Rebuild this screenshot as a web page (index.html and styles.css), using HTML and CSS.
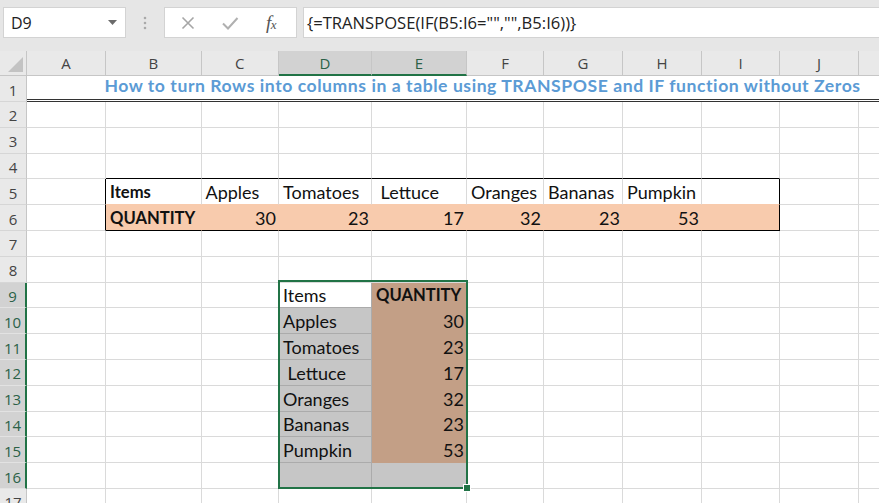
FILE: index.html
```html
<!DOCTYPE html>
<html>
<head>
<meta charset="utf-8">
<link rel="stylesheet" href="styles.css">
</head>
<body>
<div class="formula-bar">
  <div class="namebox"><span>D9</span><svg class="dd" width="9" height="5" viewBox="0 0 9 5"><polygon points="0,0 9,0 4.5,5" fill="#6b6b6b"/></svg></div>
  <div class="grip"><svg width="4" height="14" viewBox="0 0 4 14"><circle cx="2" cy="2" r="1.3" fill="#a9a9a9"/><circle cx="2" cy="7" r="1.3" fill="#a9a9a9"/><circle cx="2" cy="12" r="1.3" fill="#a9a9a9"/></svg></div>
  <div class="fx-box">
    <svg class="ic ic-x" width="20" height="20" viewBox="0 0 20 20"><path d="M4.5 4.5 L15.5 15.5 M15.5 4.5 L4.5 15.5" stroke="#a6a6a6" stroke-width="1.6" fill="none"/></svg>
    <svg class="ic ic-ok" width="20" height="20" viewBox="0 0 20 20"><path d="M3 10.5 L8 15.5 L17.5 5" stroke="#b0b0b0" stroke-width="2" fill="none"/></svg>
    <span class="fx">f<span class="fx-x">x</span></span>
  </div>
  <div class="formula">{=TRANSPOSE(IF(B5:I6="","",B5:I6))}</div>
</div>

<div class="sheet-wrap">
<table class="sheet">
  <colgroup>
    <col class="c-rh"><col class="c-a"><col class="c-b"><col class="c-c"><col class="c-d"><col class="c-e"><col class="c-f"><col class="c-g"><col class="c-h"><col class="c-i"><col class="c-j"><col class="c-k">
  </colgroup>
  <thead>
    <tr class="hdr">
      <th class="corner"><svg width="27" height="24" viewBox="0 0 27 24"><polygon points="23,6 23,21 8,21" fill="#c3c3c3"/></svg></th>
      <th>A</th><th>B</th><th>C</th><th class="sel">D</th><th class="sel">E</th><th>F</th><th>G</th><th>H</th><th>I</th><th>J</th><th></th>
    </tr>
  </thead>
  <tbody>
    <tr class="r1"><th class="rh">1</th><td class="title" colspan="11">How to turn Rows into columns in a table using TRANSPOSE and IF function without Zeros</td></tr>
    <tr><th class="rh">2</th><td></td><td></td><td></td><td></td><td></td><td></td><td></td><td></td><td></td><td></td><td></td></tr>
    <tr><th class="rh">3</th><td></td><td></td><td></td><td></td><td></td><td></td><td></td><td></td><td></td><td></td><td></td></tr>
    <tr><th class="rh">4</th><td></td><td class="box-top"></td><td class="box-top"></td><td class="box-top"></td><td class="box-top"></td><td class="box-top"></td><td class="box-top"></td><td class="box-top"></td><td class="box-top"></td><td></td><td></td></tr>
    <tr><th class="rh">5</th><td class="box-left"></td><td class="hd b">Items</td><td class="hd">Apples</td><td class="hd">Tomatoes</td><td class="hd">&nbsp;Lettuce</td><td class="hd">Oranges</td><td class="hd">Bananas</td><td class="hd">Pumpkin</td><td class="hd box-right"></td><td></td><td></td></tr>
    <tr><th class="rh">6</th><td class="box-left"></td><td class="peach b">QUANTITY</td><td class="peach num">30</td><td class="peach num">23</td><td class="peach num">17</td><td class="peach num">32</td><td class="peach num">23</td><td class="peach num">53</td><td class="peach box-right"></td><td></td><td></td></tr>
    <tr><th class="rh">7</th><td></td><td></td><td></td><td></td><td></td><td></td><td></td><td></td><td></td><td></td><td></td></tr>
    <tr><th class="rh">8</th><td></td><td></td><td></td><td></td><td></td><td></td><td></td><td></td><td></td><td></td><td></td></tr>
    <tr><th class="rh sel">9</th><td></td><td></td><td></td><td class="active">Items</td><td class="sel-fill b">QUANTITY</td><td></td><td></td><td></td><td></td><td></td><td></td></tr>
    <tr><th class="rh sel">10</th><td></td><td></td><td></td><td class="sel-gray">Apples</td><td class="sel-fill num">30</td><td></td><td></td><td></td><td></td><td></td><td></td></tr>
    <tr><th class="rh sel">11</th><td></td><td></td><td></td><td class="sel-gray">Tomatoes</td><td class="sel-fill num">23</td><td></td><td></td><td></td><td></td><td></td><td></td></tr>
    <tr><th class="rh sel">12</th><td></td><td></td><td></td><td class="sel-gray">&nbsp;Lettuce</td><td class="sel-fill num">17</td><td></td><td></td><td></td><td></td><td></td><td></td></tr>
    <tr><th class="rh sel">13</th><td></td><td></td><td></td><td class="sel-gray">Oranges</td><td class="sel-fill num">32</td><td></td><td></td><td></td><td></td><td></td><td></td></tr>
    <tr><th class="rh sel">14</th><td></td><td></td><td></td><td class="sel-gray">Bananas</td><td class="sel-fill num">23</td><td></td><td></td><td></td><td></td><td></td><td></td></tr>
    <tr><th class="rh sel">15</th><td></td><td></td><td></td><td class="sel-gray">Pumpkin</td><td class="sel-fill num">53</td><td></td><td></td><td></td><td></td><td></td><td></td></tr>
    <tr><th class="rh sel">16</th><td></td><td></td><td></td><td class="sel-gray"></td><td class="sel-gray last"></td><td></td><td></td><td></td><td></td><td></td><td></td></tr>
    <tr><th class="rh">17</th><td></td><td></td><td></td><td></td><td></td><td></td><td></td><td></td><td></td><td></td><td></td></tr>
  </tbody>
</table>
<div class="selection"><div class="handle"></div></div>
</div>
</body>
</html>
```
FILE: styles.css
```css
* { box-sizing: border-box; }

body {
  margin: 0;
  width: 879px;
  height: 503px;
  overflow: hidden;
  background: #ffffff;
  font-family: Lato, "Liberation Sans", sans-serif;
}

/* ---------- formula bar ---------- */
.formula-bar {
  height: 51px;
  background: #e6e6e6;
  display: flex;
  align-items: flex-start;
  padding-top: 7px;
}
.namebox {
  margin-left: 3px;
  width: 123px;
  height: 31px;
  background: #fff;
  border: 1px solid #d3d3d3;
  display: flex;
  align-items: center;
  justify-content: space-between;
  padding: 0 8px 0 7px;
  font-family: "Open Sans", sans-serif;
  font-size: 16px;
  color: #222;
}
.grip {
  width: 38px;
  height: 31px;
  display: flex;
  align-items: center;
  justify-content: center;
}
.fx-box {
  width: 133px;
  height: 31px;
  background: #fff;
  border: 1px solid #d3d3d3;
  display: flex;
  align-items: center;
  padding-left: 13px;
}
.ic-ok { margin-left: 22px; }
.fx {
  margin-left: 26px;
  font-family: "Liberation Serif", serif;
  font-style: italic;
  font-size: 19px;
  color: #555;
  letter-spacing: -0.5px;
}
.fx-x { font-size: 13px; }
.formula {
  margin-left: 6px;
  flex: 1;
  height: 31px;
  background: #fff;
  border: 1px solid #d3d3d3;
  border-right: none;
  padding-left: 3px;
  display: flex;
  align-items: center;
  font-family: "Open Sans", sans-serif;
  font-size: 16.6px;
  color: #222;
}

/* ---------- sheet ---------- */
.sheet-wrap { position: relative; }

.sheet {
  table-layout: fixed;
  border-collapse: separate;
  border-spacing: 0;
  width: 938px;
}
.c-rh { width: 27px; }
.c-a { width: 79px; }
.c-b { width: 95.5px; }
.c-c { width: 77.5px; }
.c-d { width: 93px; }
.c-e { width: 95px; }
.c-f { width: 77px; }
.c-g { width: 79px; }
.c-h { width: 79px; }
.c-i { width: 78px; }
.c-j { width: 79px; }
.c-k { width: 79px; }

.hdr { height: 24px; }
.hdr th {
  background: #e9e9e9;
  border-right: 1px solid #c6c6c6;
  border-bottom: 1px solid #c6c6c6;
  font-family: "Open Sans", sans-serif;
  font-weight: normal;
  font-size: 15px;
  color: #444;
  padding: 0;
  text-align: center;
  vertical-align: middle;
  line-height: 20px;
}
.hdr th.corner { padding: 0; line-height: 0; vertical-align: top; }
.hdr th.sel {
  background: #d2d2d2;
  color: #2b6147;
  border-bottom: 2px solid #217346;
}

tbody tr { height: 25.8px; }
tbody tr.r1 { height: 26px; }

.rh {
  background: #e9e9e9;
  border-right: 1px solid #c6c6c6;
  border-bottom: 1px solid #d6d6d6;
  font-family: "Open Sans", sans-serif;
  font-weight: normal;
  font-size: 15px;
  color: #444;
  text-align: center;
  vertical-align: middle;
  padding: 2px 0 0 0;
  line-height: 18px;
}
.rh.sel {
  background: #d2d2d2;
  color: #2b6147;
  border-right: 2px solid #217346;
  border-bottom: 1px solid #e2e2e2;
}

td {
  border-right: 1px solid #dadada;
  border-bottom: 1px solid #dadada;
  padding: 0 2px 2px 4px;
  font-size: 18px;
  line-height: 20px;
  color: #111;
  vertical-align: bottom;
  white-space: nowrap;
}

.title {
  border-right: none;
  border-bottom: 3px double #333;
  text-align: center;
  color: #5b9bd5;
  font-weight: bold;
  font-size: 17.6px;
  letter-spacing: 0.55px;
  padding: 0 0 3px 0;
}

.b { font-weight: bold; font-size: 16.6px; }
.num { text-align: right; }

/* data block B5:I6 */
.box-top { border-bottom-color: #000; }
.box-left { border-right-color: #000; }
.box-right { border-right-color: #000 !important; }
.hd { border-bottom-color: #f8cbad; }
.peach {
  background: #f8cbad;
  border-right-color: #f8cbad;
  border-bottom-color: #000;
}

/* transposed block D9:E16 */
.active { background: #fff; border-right-color: #ababab; border-bottom-color: #ababab; }
.sel-gray { background: #c6c6c6; border-right-color: #ababab; border-bottom-color: #ababab; }
.sel-gray.last { border-right-color: #c6c6c6; border-bottom-color: #c6c6c6; }
.sel-fill { background: #c39f86; border-right-color: #c39f86; border-bottom-color: #c39f86; }

.selection {
  position: absolute;
  left: 278px;
  top: 229px;
  width: 190px;
  height: 209px;
  border: 2px solid #217346;
  pointer-events: none;
}
.handle {
  position: absolute;
  right: -5px;
  bottom: -5px;
  width: 8px;
  height: 8px;
  background: #217346;
  border: 1px solid #fff;
}
```
